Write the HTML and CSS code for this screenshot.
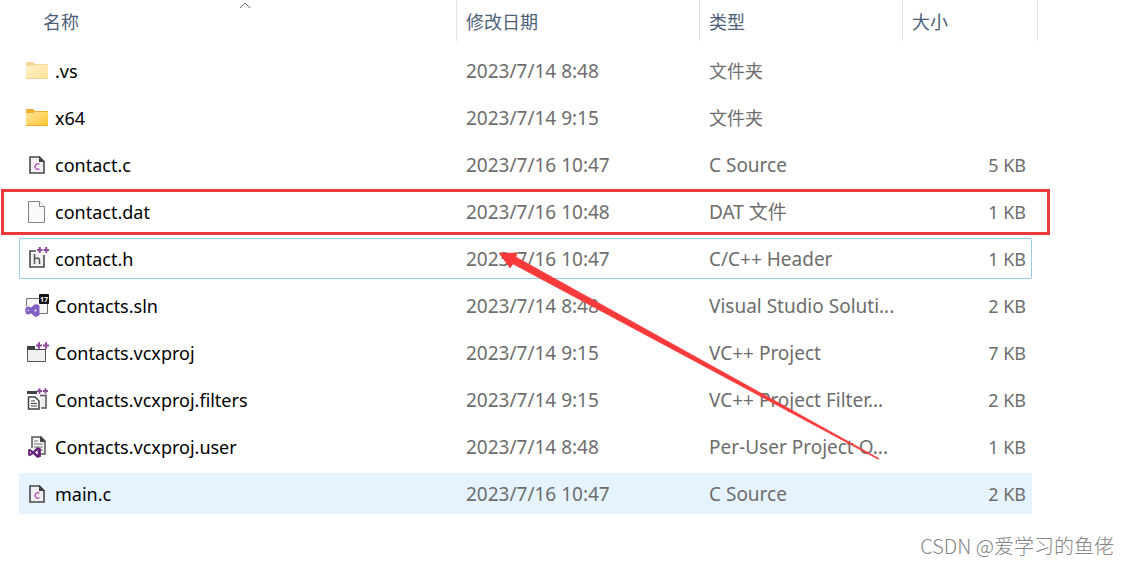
FILE: index.html
```
<!DOCTYPE html>
<html lang="zh-CN">
<head>
    <meta charset="UTF-8">
    <meta name="viewport" content="width=device-width, initial-scale=1.0">
    <title>Contacts</title>
    <link rel="stylesheet" href="styles.css">
</head>
<body>

<svg class="sprite" aria-hidden="true">
    <defs>
        <linearGradient id="gold" x1="0" y1="0" x2="1" y2="1">
            <stop offset="0" stop-color="#ffe39a"/>
            <stop offset="1" stop-color="#fdc62f"/>
        </linearGradient>
        <symbol id="folder" viewBox="0 0 24 24">
            <path d="M1 4h7l2 2h13v5H1z" fill="#efb02e"/>
            <path d="M1 8h7l2-1h13v14H1z" fill="url(#gold)"/>
            <path d="M1 20h22v1H1z" fill="#e5a92d"/>
        </symbol>
        <symbol id="c-file" viewBox="0 0 24 24">
            <path d="M5 5h9.500l4.500 4.500V21H5z" fill="#f1eff3" stroke="#4a4a4e" stroke-width="1.600"/>
            <path d="M14 4l6 6h-6z" fill="#414145"/>
            <path d="M14.500 12.200a2.800 2.800 0 1 0 0 4.600" fill="none" stroke="#b04fae" stroke-width="1.300"/>
        </symbol>
        <symbol id="file" viewBox="0 0 24 24">
            <path d="M3.500 2.500h11l5 5v16h-16z" fill="#fafafa" stroke="#838383"/>
            <path d="M14.500 2.500v5h5" fill="#fff" stroke="#838383"/>
        </symbol>
        <symbol id="plus" viewBox="0 0 12 6">
            <path d="M0 3h5.500M2.750 0v6M6.500 3h5.500M9.250 0v6" fill="none" stroke="#8c4a99" stroke-width="2"/>
        </symbol>
        <symbol id="h-file" viewBox="0 0 24 24">
            <path d="M5 5h14v16H5z" fill="#f1f1f1"/>
            <path d="M11 5H5v16h14V9" fill="none" stroke="#4a4a4d" stroke-width="1.600"/>
            <path d="M9.500 8v10M9.500 13.500q1-1.500 2.500-1.500 2.500 0 2.500 2.500V18" fill="none" stroke="#555" stroke-width="1.500"/>
            <use href="#plus" x="12" y="1" width="12" height="6"/>
        </symbol>
        <symbol id="vs" viewBox="0 0 14 12">
            <path d="M0 3l2-1 3.500 2.500L10 0l4 1.500v9L10 12 5.500 7.500 2 10 0 9zM2 4.500v3L3.500 6zM10.500 3.500L7.500 6l3 2.500z" fill-rule="evenodd"/>
        </symbol>
        <symbol id="vs-round" viewBox="0 0 14 12">
            <path d="M1 3q2-1.500 4.500.5L9 .5Q11-.5 13.500 1.500v9Q11 12.500 9 11.500L5.500 8.500Q3 10.500 1 9-.5 6 1 3zM2.500 5v2L4 6zM10.500 4.500L8.500 6l2 1.500z" fill-rule="evenodd"/>
        </symbol>
        <symbol id="solution" viewBox="0 0 24 24">
            <path d="M1.500 13V5.500h21v15H14" fill="#f5f5f5" stroke="#717171"/>
            <use href="#vs-round" x="0" y="11" width="15" height="13" fill="#8060c5"/>
            <rect x="14" y="1" width="10" height="10" rx="1" fill="#111"/>
            <text x="19" y="9" class="badge-text">17</text>
        </symbol>
        <symbol id="project" viewBox="0 0 24 24">
            <path d="M2.500 6.500h18v15h-18z" fill="#f0f0f0" stroke="#555"/>
            <path d="M2 6h8v2h11v2H2z" fill="#414145"/>
            <path d="M10 2h14v7H10z" fill="#fff"/>
            <use href="#plus" x="11" y="2" width="13" height="7"/>
        </symbol>
        <symbol id="filters" viewBox="0 0 24 24">
            <path d="M2 4h10v3H2z" fill="#414145"/>
            <path d="M15 8.500h6V21h-5" fill="#eee" stroke="#555" stroke-width="1.500"/>
            <path d="M3.500 10H10l4 4v8H3.500z" fill="#fff" stroke="#414145" stroke-width="1.500"/>
            <path d="M6 14h4M6 16.500h6M6 19h6" stroke="#414145" stroke-width="1.200"/>
            <use href="#plus" x="12" y="1" width="11" height="6"/>
        </symbol>
        <symbol id="user" viewBox="0 0 24 24">
            <path d="M7 14V3h9l4 4v13h-4" fill="#f3f3f3" stroke="#555" stroke-width="1.500"/>
            <path d="M15 2l6 6h-6z" fill="#414145"/>
            <path d="M9 7h4M9 10h9M9 13h9M15 16h3" stroke="#777" stroke-width="1.200"/>
            <use href="#vs" x="3" y="13" width="13" height="11" fill="#68217a"/>
        </symbol>
    </defs>
</svg>

<main class="explorer">
    <table class="files">
        <colgroup>
            <col class="col-name">
            <col class="col-date">
            <col class="col-type">
            <col class="col-size">
        </colgroup>
        <thead>
            <tr>
                <th aria-sort="ascending">
                    <button class="sort">名称</button>
                    <svg class="chevron" viewBox="0 0 12 7"><path d="M1 6l5-5 5 5"/></svg>
                </th>
                <th><button class="sort">修改日期</button></th>
                <th><button class="sort">类型</button></th>
                <th><button class="sort last">大小</button></th>
            </tr>
        </thead>
        <tbody>
            <tr>
                <td><div class="name"><svg class="icon hidden-item"><use href="#folder"/></svg>.vs</div></td>
                <td>2023/7/14 8:48</td>
                <td class="zh">文件夹</td>
                <td></td>
            </tr>
            <tr>
                <td><div class="name"><svg class="icon"><use href="#folder"/></svg>x64</div></td>
                <td>2023/7/14 9:15</td>
                <td class="zh">文件夹</td>
                <td></td>
            </tr>
            <tr>
                <td><div class="name"><svg class="icon"><use href="#c-file"/></svg>contact.c</div></td>
                <td>2023/7/16 10:47</td>
                <td>C Source</td>
                <td>5 KB</td>
            </tr>
            <tr>
                <td><div class="name"><svg class="icon"><use href="#file"/></svg>contact.dat</div></td>
                <td>2023/7/16 10:48</td>
                <td>DAT 文件</td>
                <td>1 KB</td>
            </tr>
            <tr class="focused">
                <td><div class="name"><svg class="icon"><use href="#h-file"/></svg>contact.h</div></td>
                <td>2023/7/16 10:47</td>
                <td>C/C++ Header</td>
                <td>1 KB</td>
            </tr>
            <tr>
                <td><div class="name"><svg class="icon"><use href="#solution"/></svg>Contacts.sln</div></td>
                <td>2023/7/14 8:48</td>
                <td>Visual Studio Soluti...</td>
                <td>2 KB</td>
            </tr>
            <tr>
                <td><div class="name"><svg class="icon"><use href="#project"/></svg>Contacts.vcxproj</div></td>
                <td>2023/7/14 9:15</td>
                <td>VC++ Project</td>
                <td>7 KB</td>
            </tr>
            <tr>
                <td><div class="name"><svg class="icon"><use href="#filters"/></svg>Contacts.vcxproj.filters</div></td>
                <td>2023/7/14 9:15</td>
                <td>VC++ Project Filter...</td>
                <td>2 KB</td>
            </tr>
            <tr>
                <td><div class="name"><svg class="icon"><use href="#user"/></svg>Contacts.vcxproj.user</div></td>
                <td>2023/7/14 8:48</td>
                <td>Per-User Project O...</td>
                <td>1 KB</td>
            </tr>
            <tr class="hovered">
                <td><div class="name"><svg class="icon"><use href="#c-file"/></svg>main.c</div></td>
                <td>2023/7/16 10:47</td>
                <td>C Source</td>
                <td>2 KB</td>
            </tr>
        </tbody>
    </table>

    <div class="mark-box"></div>
    <svg class="mark-arrow" viewBox="0 0 380 208">
        <path d="M0 1l18 0-1 4 363 201.500-.5 1L14 12l-3 4z"/>
    </svg>
</main>

<footer class="watermark">CSDN @爱学习的鱼佬</footer>

</body>
</html>
```
FILE: styles.css
```
body {
    margin: 0;
    background: #fff;
    color: #6d6d6d;
    font-family: 'Noto Sans', 'Noto Sans CJK SC', sans-serif;
    font-size: 19px;
    line-height: 24px;
}
.sprite {
    position: absolute;
    width: 0;
    height: 0;
}
.explorer {
    display: flow-root;
    position: relative;
    padding: 0 97px 0 19px;
}
.files {
    width: 100%;
    table-layout: fixed;
    border-collapse: separate;
    border-spacing: 0 6px;
    margin-top: -6px;
}
.col-date {
    width: 243px;
}
.col-type {
    width: 203px;
}
.col-size {
    width: 130px;
}
th {
    position: relative;
    height: 44px;
    padding: 0;
    vertical-align: top;
}
.sort {
    display: block;
    width: 100%;
    height: 41px;
    padding: 0 9px;
    border: 0;
    border-left: 1px solid #e2e2e2;
    background: none;
    color: #4c607a;
    font-family: 'Noto Sans CJK SC', sans-serif;
    font-size: 18px;
    text-align: left;
}
th:first-child .sort {
    border-left: 0;
    padding-left: 24px;
}
.sort.last {
    width: 136px;
    border-right: 1px solid #e2e2e2;
}
.chevron {
    position: absolute;
    top: 2px;
    left: 220px;
    width: 12px;
    height: 7px;
    fill: none;
    stroke: #666;
}
td {
    height: 39px;
    padding: 0 9px;
    border: 1px solid transparent;
    border-width: 1px 0;
    white-space: nowrap;
}
td:first-child {
    border-left-width: 1px;
    padding: 0 5px;
    color: #000;
    font-size: 18px;
}
td:nth-child(2),
td:nth-child(3) {
    padding-left: 10px;
}
td:last-child {
    border-right-width: 1px;
    padding-right: 5px;
    font-size: 18px;
    text-align: right;
}
.zh {
    font-size: 18px;
}
.name {
    display: flex;
    align-items: center;
    gap: 6px;
}
.icon {
    width: 24px;
    height: 24px;
    margin-bottom: 2px;
}
.hidden-item {
    opacity: 0.5;
}
.badge-text {
    fill: #fff;
    font-size: 7px;
    font-weight: bold;
    text-anchor: middle;
}
.focused td {
    border-color: #99cbe8;
}
.focused td:first-child {
    border-radius: 2px 0 0 2px;
}
.focused td:last-child {
    border-radius: 0 2px 2px 0;
}
.hovered td {
    background: #e5f3ff;
    border-color: #e5f3ff;
}
.mark-box {
    position: absolute;
    top: 189px;
    left: 1px;
    right: 79px;
    height: 40px;
    border: 3px solid #e93b3b;
}
.mark-arrow {
    position: absolute;
    top: 252px;
    left: 499px;
    width: 380px;
    height: 208px;
    fill: #f93a3a;
}
.mark-arrow path {
    stroke: #f93a3a;
    stroke-width: 0.5;
}
.watermark {
    padding: 14px 15px 7px;
    color: #858585;
    font-family: 'Noto Sans CJK SC', sans-serif;
    font-size: 20px;
    font-weight: 300;
    text-align: right;
}
```
